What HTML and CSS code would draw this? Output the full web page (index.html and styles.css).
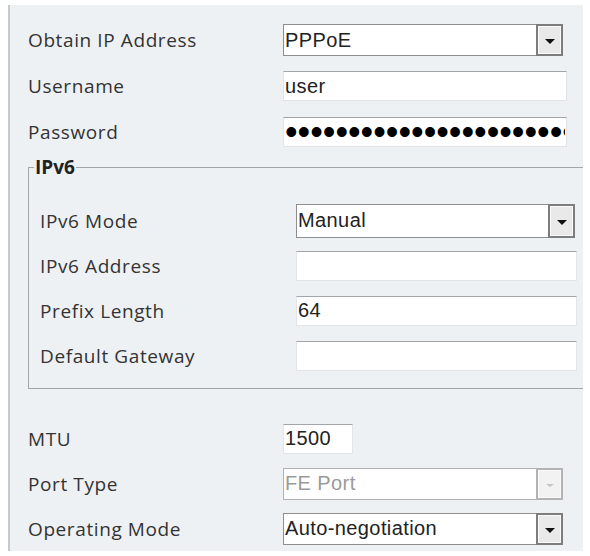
FILE: index.html
```html
<!DOCTYPE html>
<html>
<head lang="en">
    <meta charset="utf-8">
    <title>Network Settings</title>
    <link rel="stylesheet" href="styles.css">
</head>
<body>

<div class="panel">
    <div class="rows">
        <label>Obtain IP Address</label>
        <div class="select"><span class="value">PPPoE</span><span class="arrow"></span></div>

        <label>Username</label>
        <input class="text" type="text" value="user">

        <label>Password</label>
        <input class="text pass" type="password" value="passwordpasswordpassword1234">
    </div>

    <fieldset>
        <legend>IPv6</legend>
        <div class="rows inner">
            <label>IPv6 Mode</label>
            <div class="select"><span class="value">Manual</span><span class="arrow"></span></div>

            <label>IPv6 Address</label>
            <input class="text" type="text" value="">

            <label>Prefix Length</label>
            <input class="text" type="text" value="64">

            <label>Default Gateway</label>
            <input class="text" type="text" value="">
        </div>
    </fieldset>

    <div class="rows bottom">
        <label>MTU</label>
        <input class="text short" type="text" value="1500">

        <label>Port Type</label>
        <div class="select disabled"><span class="value">FE Port</span><span class="arrow"></span></div>

        <label>Operating Mode</label>
        <div class="select"><span class="value">Auto-negotiation</span><span class="arrow"></span></div>
    </div>
</div>

</body>
</html>
```

FILE: styles.css
```css
* { box-sizing: border-box; }

body {
    margin: 0;
    background: #fff;
    font-family: 'Open Sans', sans-serif;
    font-size: 19px;
    letter-spacing: 0.6px;
    color: #333;
}

.panel {
    margin: 5px 7px 0 8px;
    padding: 12px 0 0 18px;
    height: 546px;
    background: #eef1f4;
    border-left: 2px solid #c6cacd;
}

.rows {
    display: grid;
    grid-template-columns: 255px 284px;
    grid-auto-rows: 46px;
    align-items: center;
}

/* inputs */
.text {
    height: 30px;
    width: 284px;
    margin: 0;
    padding: 0 1px;
    background: #fff;
    border: 1px solid #e1e5e8;
    border-top-color: #a3a6a8;
    font-family: 'Liberation Sans', Arial, sans-serif;
    font-size: 20px;
    letter-spacing: 0.4px;
    color: #222;
    outline: none;
}

.text.short { width: 70px; }

.text.pass {
    font-size: 36px;
    letter-spacing: 0;
    color: #000;
}

/* fake select boxes */
.select {
    display: flex;
    height: 32px;
    width: 280px;
    background: #fff;
    border: 1px solid #8e8e8e;
    font-family: 'Liberation Sans', Arial, sans-serif;
    font-size: 20px;
    letter-spacing: 0.4px;
    color: #222;
}

.select .value {
    flex: 1;
    align-self: center;
    padding-left: 1px;
}

.select .arrow {
    display: flex;
    align-items: center;
    justify-content: center;
    width: 27px;
    margin: -1px -1px -1px 0;
    padding-top: 3px;
    background: #e9e9e9;
    border: 2px solid #7d7d7d;
    box-shadow: inset 0 0 0 1px #fafafa;
}

.select .arrow::after {
    content: "";
    border-left: 5px solid transparent;
    border-right: 5px solid transparent;
    border-top: 5px solid #111;
}

.select.disabled { border-color: #b1b1b1; color: #9a9a9a; }

.select.disabled .arrow {
    border-color: #b3b3b3;
    background: #f2f2f2;
}

.select.disabled .arrow::after {
    border-left-width: 4px;
    border-right-width: 4px;
    border-top: 3px solid #c4c4c4;
}

/* IPv6 group */
fieldset {
    margin: 2px 0 0 0;
    padding: 21px 0 10px 11px;
    border: 1px solid #a2a6a9;
    border-right: none;
}

legend {
    margin-left: -6px;
    padding: 0 1px;
    line-height: 20px;
    font-weight: bold;
    letter-spacing: 0;
    color: #222;
}

.inner {
    grid-template-columns: 256px 281px;
    grid-auto-rows: 45px;
}

.inner .select { width: 279px; height: 34px; }
.inner .text { width: 281px; }

.bottom {
    margin-top: 27px;
    grid-auto-rows: 45px;
}
```
